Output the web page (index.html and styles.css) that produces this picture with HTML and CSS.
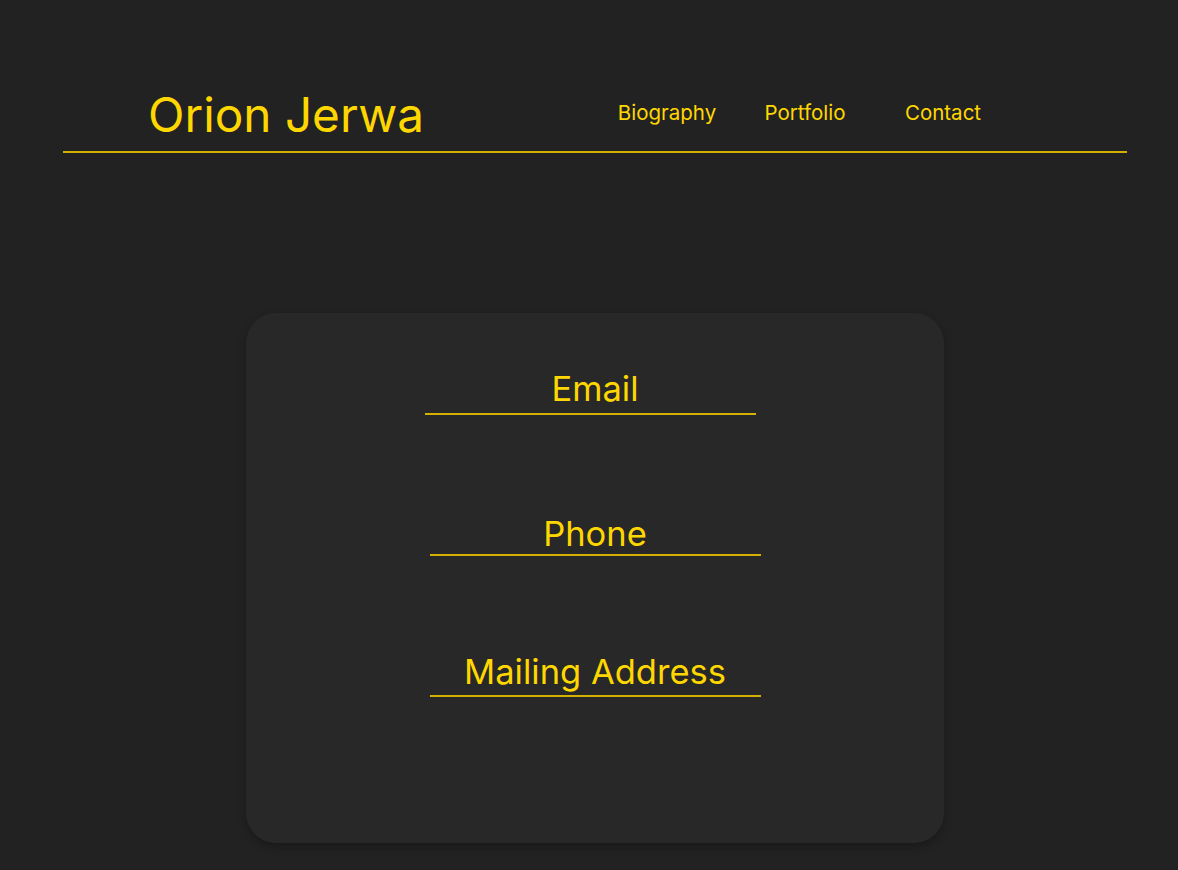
FILE: index.html
```html
<!DOCTYPE html>
<html lang="en">
<head>
<meta charset="utf-8">
<title>Orion Jerwa</title>
<link rel="stylesheet" href="styles.css">
</head>
<body>
<header class="site-header">
  <h1 class="site-title">Orion Jerwa</h1>
  <nav class="site-nav">
    <a class="nav-link" href="#">Biography</a>
    <a class="nav-link" href="#">Portfolio</a>
    <a class="nav-link" href="#">Contact</a>
  </nav>
</header>
<main class="main">
  <section class="contact-card">
    <div class="field field-email"><span class="field-label">Email</span></div>
    <div class="field field-phone"><span class="field-label">Phone</span></div>
    <div class="field field-address"><span class="field-label">Mailing Address</span></div>
  </section>
</main>
</body>
</html>
```
FILE: styles.css
```css
* { box-sizing: border-box; }
html, body { margin: 0; padding: 0; }
body {
  background: #222222;
  color: #ffd700;
  font-family: Inter, "Noto Sans", sans-serif;
  min-height: 870px;
}
.site-header {
  margin: 0 51px 0 63px;
  padding-top: 85px;
  height: 153px;
  border-bottom: 2px solid #d4b000;
  display: flex;
  align-items: flex-start;
}
.site-title {
  margin: 0 0 0 85px;
  font-weight: 400;
  font-size: 47.7px;
  line-height: 60px;
  color: #ffd700;
  width: 450px;
}
.site-nav {
  display: grid;
  grid-template-columns: repeat(3, 138px);
  padding-top: 16px;
}
.nav-link {
  text-align: center;
  color: #ffd700;
  text-decoration: none;
  font-size: 20.5px;
  line-height: 24px;
}
.main {
  display: flex;
  justify-content: center;
  padding: 160px 0 26px 12px;
}
.contact-card {
  width: 698px;
  height: 530px;
  background: #282828;
  border-radius: 30px;
  box-shadow: 0 4px 8px rgba(0, 0, 0, 0.25);
  display: flex;
  flex-direction: column;
  align-items: center;
  padding-top: 55px;
}
.field {
  width: 331px;
  text-align: center;
  border-bottom: 2px solid #d4b000;
  font-size: 34.5px;
  line-height: 42px;
  padding-bottom: 3px;
}
.field-email { margin-right: 10px; padding-left: 10px; }
.field-phone { margin-top: 99px; padding-bottom: 1px; line-height: 39px; }
.field-address { margin-top: 95px; padding-bottom: 2px; }
```
